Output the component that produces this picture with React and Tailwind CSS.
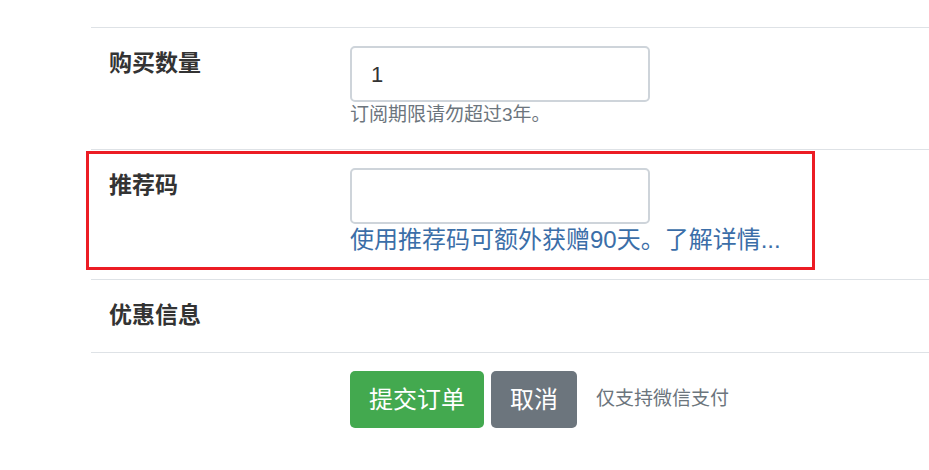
export default function App() {
  return (
    <div className="relative w-[929px] h-[470px] overflow-hidden bg-white">
      <div className="pt-[27px] pl-[91px] font-['Liberation_Sans','Noto_Sans_CJK_SC',sans-serif]">
        {/* Row 1 */}
        <div className="flex border-t border-[#dee2e6] pt-[18px] pb-[21px]">
          <div className="w-[259px] shrink-0 pl-[18px] text-[23px] leading-[34px] font-bold text-[#333]">
            购买数量
          </div>
          <div className="flex flex-col">
            <div className="w-[300px] h-[56px] border-2 border-[#ced4da] rounded-[5px] flex items-center pl-[19px] text-[22px] text-[#333]">
              1
            </div>
            <div className="text-[19px] leading-[26px] text-[#6c757d]">
              订阅期限请勿超过3年。
            </div>
          </div>
        </div>
        {/* Row 2 */}
        <div className="flex border-t border-[#dee2e6] pt-[18px] pb-[23px]">
          <div className="w-[259px] shrink-0 pl-[18px] text-[23px] leading-[34px] font-bold text-[#333]">
            推荐码
          </div>
          <div className="flex flex-col">
            <div className="w-[300px] h-[56px] border-2 border-[#ced4da] rounded-[5px]"></div>
            <div className="text-[24px] leading-[32px] text-[#3b6ea8] whitespace-nowrap">
              使用推荐码可额外获赠90天。了解详情...
            </div>
          </div>
        </div>
        {/* Row 3 */}
        <div className="flex border-t border-[#dee2e6] pt-[18px] pb-[20px]">
          <div className="w-[259px] shrink-0 pl-[18px] text-[23px] leading-[34px] font-bold text-[#333]">
            优惠信息
          </div>
        </div>
        {/* Buttons */}
        <div className="flex border-t border-[#dee2e6] pt-[18px]">
          <div className="w-[259px] shrink-0"></div>
          <div className="flex items-center">
            <button className="h-[57px] px-[19px] rounded-[5px] bg-[#43a94f] text-white text-[24px]">
              提交订单
            </button>
            <button className="ml-[7px] h-[57px] px-[19px] rounded-[5px] bg-[#6c757d] text-white text-[24px]">
              取消
            </button>
            <span className="ml-[19px] text-[19px] text-[#6c757d]">
              仅支持微信支付
            </span>
          </div>
        </div>
      </div>
      {/* Red annotation box */}
      <div className="absolute left-[86px] top-[151px] w-[729px] h-[119px] border-[3px] border-[#ec1c24] pointer-events-none"></div>
    </div>
  );
}
